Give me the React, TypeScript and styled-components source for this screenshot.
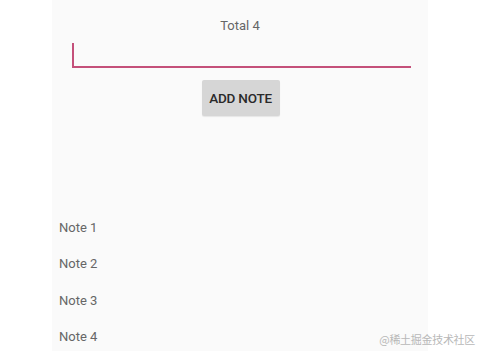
import React from "react";
import styled, { createGlobalStyle } from "styled-components";

const Global = createGlobalStyle`
  html, body { margin: 0; padding: 0; background: #ffffff; }
  body { font-family: Roboto, "Noto Sans", sans-serif; }
`;

const Page = styled.div`
  position: relative;
  width: 480px;
  height: 351px;
  overflow: hidden;
  background: #ffffff;
`;

const Screen = styled.div`
  margin-left: 52px;
  width: 376px;
  height: 351px;
  background: #fafafa;
  display: flex;
  flex-direction: column;
`;

const Total = styled.div`
  margin-top: 17px;
  height: 18px;
  line-height: 18px;
  text-align: center;
  font-size: 13px;
  color: #666666;
`;

const Field = styled.div`
  margin: 8px 17px 0 20px;
  height: 24px;
  border-bottom: 2px solid #c4507a;
  display: flex;
  align-items: flex-end;
`;

const Caret = styled.span`
  width: 2px;
  height: 23px;
  background: #c4507a;
`;

const ButtonRow = styled.div`
  display: flex;
  justify-content: center;
  padding-left: 1px;
  margin-top: 12px;
`;

const AddButton = styled.button`
  width: 78px;
  height: 36px;
  border: none;
  border-radius: 2px;
  background: #d6d6d6;
  color: #2a2a2a;
  font-family: Roboto, sans-serif;
  font-weight: 500;
  font-size: 13.5px;
  letter-spacing: -0.2px;
  padding: 0;
  box-shadow: 0 1px 1px rgba(0,0,0,0.08);
`;

const NoteList = styled.div`
  margin-top: 94px;
  display: flex;
  flex-direction: column;
`;

const NoteRow = styled.div`
  height: 36.33px;
  line-height: 36.33px;
  padding-left: 7px;
  font-size: 13px;
  color: #666666;
`;

const Watermark = styled.div`
  position: absolute;
  right: 5px;
  bottom: 4px;
  font-family: "Noto Sans CJK SC", sans-serif;
  font-size: 11px;
  color: #b8b8b8;
  letter-spacing: -0.3px;
`;

export default function App() {
  const notes = ["Note 1", "Note 2", "Note 3", "Note 4"];
  return (
    <Page>
      <Global />
      <Screen>
        <Total>Total {notes.length}</Total>
        <Field>
          <Caret />
        </Field>
        <ButtonRow>
          <AddButton>ADD NOTE</AddButton>
        </ButtonRow>
        <NoteList>
          {notes.map((n) => (
            <NoteRow key={n}>{n}</NoteRow>
          ))}
        </NoteList>
      </Screen>
      <Watermark>@稀土掘金技术社区</Watermark>
    </Page>
  );
}
